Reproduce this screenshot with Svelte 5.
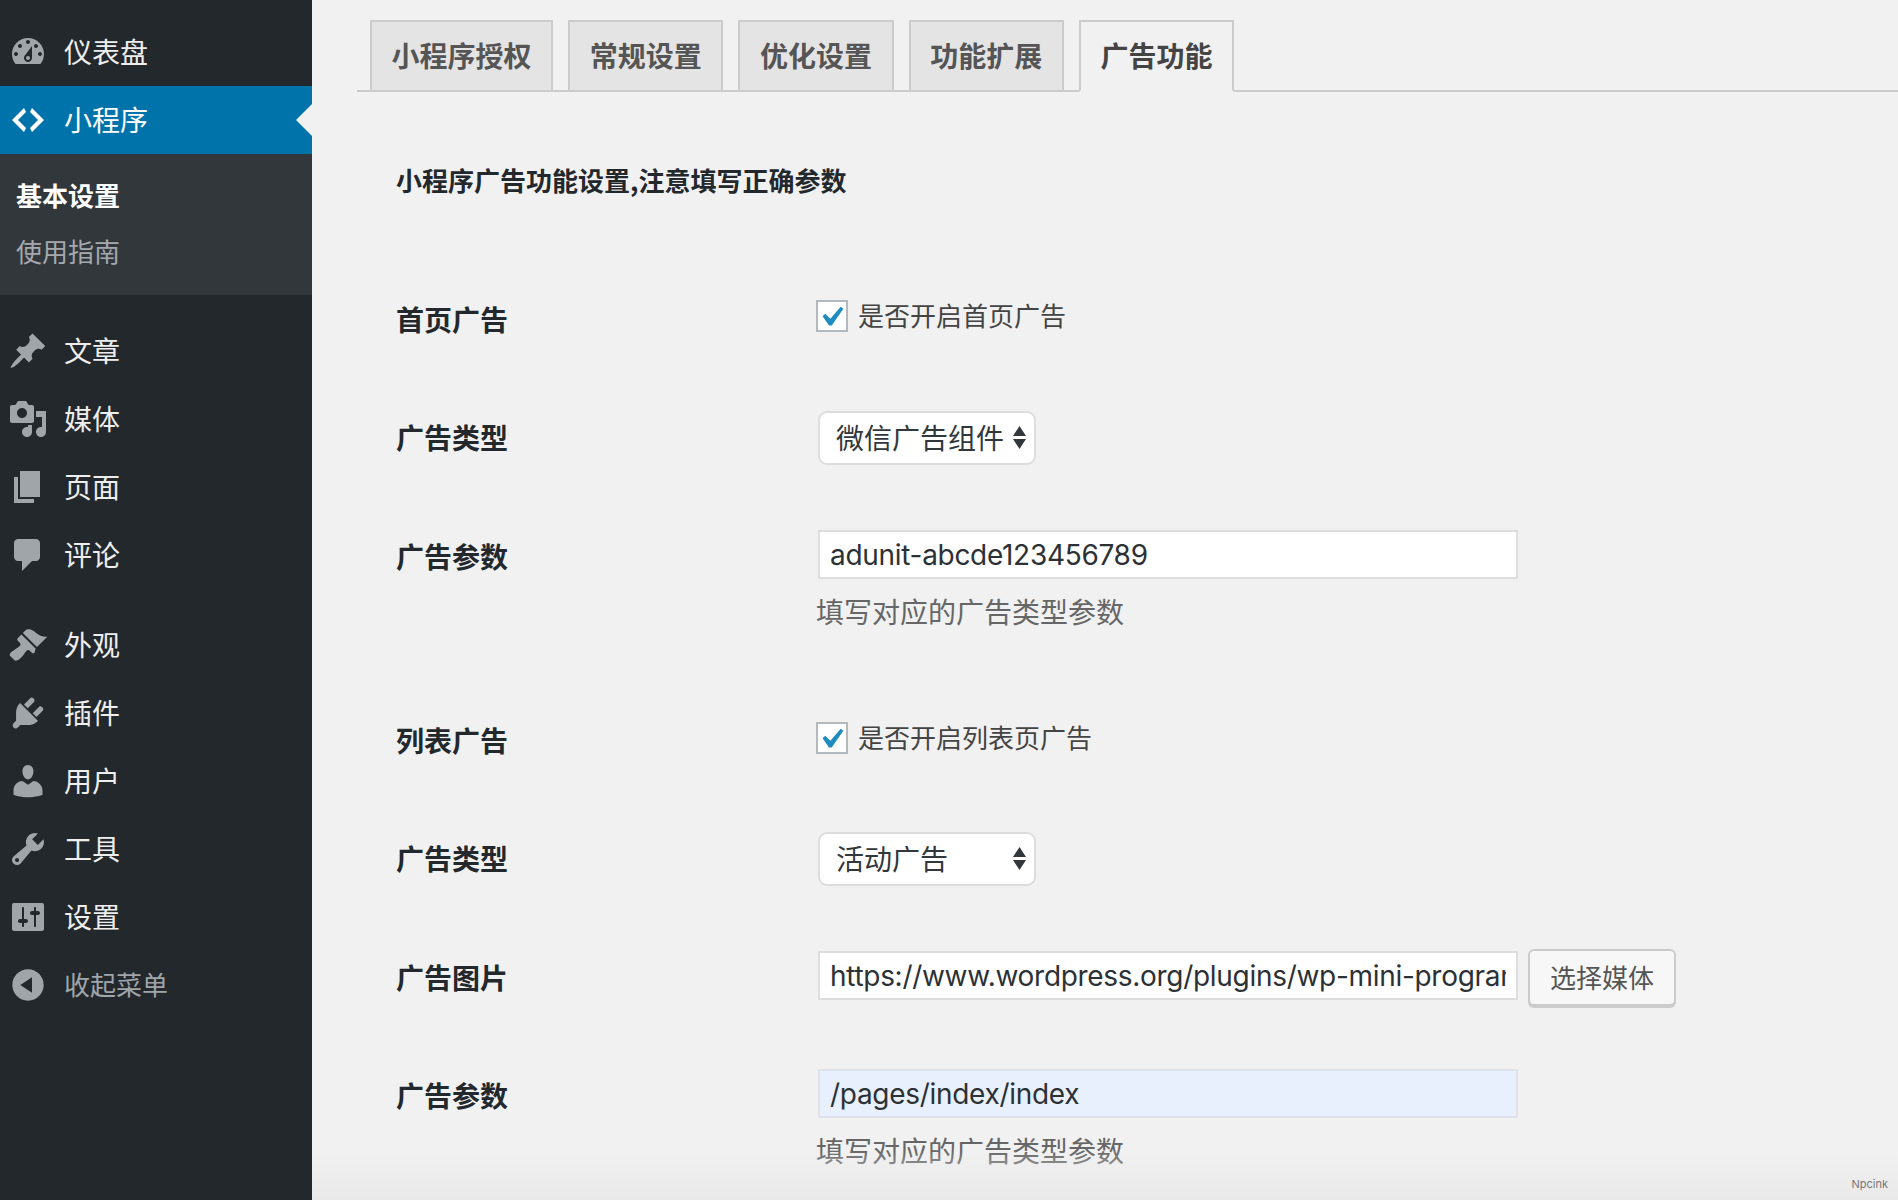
<script>
	// dashicons paths, 20x20 box
	const icons = {
		dashboard: 'M3.76 16h12.48c1.1-1.37 1.76-3.11 1.76-5 0-4.42-3.58-8-8-8s-8 3.58-8 8c0 1.89.66 3.63 1.76 5zM10 4c.55 0 1 .45 1 1s-.45 1-1 1-1-.45-1-1 .45-1 1-1zM6 6c.55 0 1 .45 1 1s-.45 1-1 1-1-.45-1-1 .45-1 1-1zm8 0c.55 0 1 .45 1 1s-.45 1-1 1-1-.45-1-1 .45-1 1-1zm-5.37 5.55L12 7v6c0 1.1-.9 2-2 2s-2-.9-2-2c0-.57.24-1.08.63-1.45zM4 10c.55 0 1 .45 1 1s-.45 1-1 1-1-.45-1-1 .45-1 1-1zm12 0c.55 0 1 .45 1 1s-.45 1-1 1-1-.45-1-1 .45-1 1-1zm-5 3c0-.55-.45-1-1-1s-1 .45-1 1 .45 1 1 1 1-.45 1-1z',
		code: 'M9 6l-4 4 4 4-1 2-6-6 6-6zm2 8l4-4-4-4 1-2 6 6-6 6z',
		post: 'M10.44 3.02l1.82-1.82 6.36 6.35-1.83 1.82c-1.05-.68-2.48-.57-3.41.36l-.75.75c-.92.93-1.04 2.35-.35 3.41l-1.83 1.82-2.41-2.41-2.8 2.79c-.42.42-3.38 2.71-3.8 2.29s1.86-3.39 2.28-3.81l2.79-2.79L4.1 9.36l1.83-1.82c1.05.69 2.48.57 3.4-.36l.75-.75c.93-.92 1.05-2.35.36-3.41z',
		media: 'M13 11V4c0-.55-.45-1-1-1h-1.67L9 1H5L3.67 3H2c-.55 0-1 .45-1 1v7c0 .55.45 1 1 1h10c.55 0 1-.45 1-1zM7 4.5c1.38 0 2.5 1.12 2.5 2.5S8.38 9.5 7 9.5 4.5 8.38 4.5 7 5.62 4.5 7 4.5zM14 6h5v10.5c0 1.38-1.12 2.5-2.5 2.5S14 17.88 14 16.5s1.12-2.5 2.5-2.5c.17 0 .34.02.5.05V9h-3V6zm-4 8.05V13h2v3.5c0 1.38-1.12 2.5-2.5 2.5S7 17.88 7 16.5 8.12 14 9.5 14c.17 0 .34.02.5.05z',
		page: 'M6 15V2h10v13H6zm-1 1h8v2H3V5h2v11z',
		comments: 'M5 2h9c1.1 0 2 .9 2 2v7c0 1.1-.9 2-2 2h-2l-5 5v-5H5c-1.1 0-2-.9-2-2V4c0-1.1.9-2 2-2z',
		appearance: 'M14.48 11.06L7.41 3.99l1.5-1.5c.5-.56 2.3-.47 3.51.32 1.21.8 1.43 1.28 2.91 2.1 1.18.64 2.45 1.26 4.45.85zm-.71.71L6.7 4.7 4.93 6.47c-.39.39-.39 1.02 0 1.41l1.06 1.06c.39.39.39 1.03 0 1.42-.6.6-1.43 1.11-2.21 1.69-.35.26-.7.53-1.01.84C1.43 13.23.4 14.85 1.1 15.55l2.12 2.12c.7.7 2.32-.33 3.66-1.67.31-.31.58-.66.84-1.01.58-.78 1.09-1.61 1.69-2.21.39-.39 1.02-.39 1.41 0l1.06 1.06c.39.39 1.02.39 1.41 0z',
		plugins: 'M13.11 4.36L9.87 7.6 8 5.73l3.24-3.24c.35-.34 1.05-.2 1.56.32.52.51.66 1.21.31 1.55zm-8 1.77l.91-1.12 9.01 9.01-1.19.84c-.71.71-2.63 1.16-3.82 1.16H6.14L4.9 17.26c-.59.59-1.54.59-2.12 0-.59-.58-.59-1.53 0-2.12l1.24-1.24v-3.88c0-1.13.4-3.19 1.09-3.89zm7.26 3.97l3.24-3.24c.34-.35 1.04-.21 1.55.31.52.51.66 1.21.31 1.55l-3.24 3.25z',
		users: 'M10 9.25c-2.27 0-2.73-3.44-2.73-3.44C7 4.02 7.82 2 9.97 2c2.16 0 2.98 2.02 2.71 3.81 0 0-.41 3.44-2.68 3.44zm0 2.57L12.72 10c2.39 0 4.52 2.33 4.52 4.53v2.49s-3.65 1.13-7.24 1.13c-3.65 0-7.24-1.13-7.24-1.13v-2.49c0-2.25 1.94-4.48 4.47-4.48z',
		tools: 'M16.68 9.77c-1.34 1.34-3.3 1.67-4.95.99l-5.41 6.52c-.99.99-2.59.99-3.58 0s-.99-2.59 0-3.57l6.52-5.42c-.68-1.65-.35-3.61.99-4.95 1.28-1.28 3.12-1.62 4.72-1.06l-2.89 2.89 2.82 2.82 2.86-2.87c.53 1.58.18 3.39-1.08 4.65zM3.81 16.21c.4.39 1.04.39 1.43 0 .4-.4.4-1.04 0-1.43-.39-.4-1.03-.4-1.43 0-.39.39-.39 1.03 0 1.43z',
		settings: 'M18 16V4c0-.55-.45-1-1-1H3c-.55 0-1 .45-1 1v12c0 .55.45 1 1 1h14c.55 0 1-.45 1-1zM8 11h1c.55 0 1 .45 1 1s-.45 1-1 1H8v1.5c0 .28-.22.5-.5.5s-.5-.22-.5-.5V13H6c-.55 0-1-.45-1-1s.45-1 1-1h1V5.5c0-.28.22-.5.5-.5s.5.22.5.5V11zm5-2h-1c-.55 0-1-.45-1-1s.45-1 1-1h1V5.5c0-.28.22-.5.5-.5s.5.22.5.5V7h1c.55 0 1 .45 1 1s-.45 1-1 1h-1v5.5c0 .28-.22.5-.5.5s-.5-.22-.5-.5V9z',
		collapse: 'M10 2.16c4.33 0 7.84 3.51 7.84 7.84s-3.51 7.84-7.84 7.84S2.16 14.33 2.16 10 5.71 2.16 10 2.16zm2 11.72V6.12L6.18 9.97z'
	};

	const topMenu = [
		{ icon: 'dashboard', label: '仪表盘' },
		{ icon: 'code', label: '小程序', active: true }
	];
	const contentMenu = [
		{ icon: 'post', label: '文章' },
		{ icon: 'media', label: '媒体' },
		{ icon: 'page', label: '页面' },
		{ icon: 'comments', label: '评论' }
	];
	const adminMenu = [
		{ icon: 'appearance', label: '外观' },
		{ icon: 'plugins', label: '插件' },
		{ icon: 'users', label: '用户' },
		{ icon: 'tools', label: '工具' },
		{ icon: 'settings', label: '设置' }
	];

	const tabs = ['小程序授权', '常规设置', '优化设置', '功能扩展', '广告功能'];
</script>

{#snippet menuItem(item)}
	<a href="#top" class="item" class:active={item.active}>
		<svg class="icon" viewBox="0 0 20 20"><path d={icons[item.icon]} /></svg>
		<span>{item.label}</span>
	</a>
{/snippet}

{#snippet arrows()}
	<svg class="arrows" viewBox="0 0 13 23"><path d="M6.5 0L13 10H0zM0 13h13L6.5 23z" /></svg>
{/snippet}

{#snippet check()}
	<span class="box">
		<svg viewBox="4 3 13 13"><path d="M14.83 4.89l1.34.94-5.81 8.38H9.02L5.78 9.67l1.34-1.25 2.57 2.4z" /></svg>
	</span>
{/snippet}

<div class="page">
	<nav class="sidebar">
		{#each topMenu as item}
			{@render menuItem(item)}
		{/each}
		<div class="submenu">
			<a href="#top" class="current">基本设置</a>
			<a href="#top">使用指南</a>
		</div>
		<div class="group">
			{#each contentMenu as item}
				{@render menuItem(item)}
			{/each}
		</div>
		<div class="group">
			{#each adminMenu as item}
				{@render menuItem(item)}
			{/each}
		</div>
		<a href="#top" class="item collapse">
			<svg class="icon" viewBox="0 0 20 20"><path d={icons.collapse} /></svg>
			<span>收起菜单</span>
		</a>
	</nav>

	<main class="main">
		<div class="tabs">
			{#each tabs as tab, i}
				<a href="#top" class="tab" class:selected={i === tabs.length - 1}>{tab}</a>
			{/each}
		</div>

		<div class="content">
			<h2>小程序广告功能设置,注意填写正确参数</h2>

			<div class="row check-row">
				<div class="label check-label">首页广告</div>
				<label class="check">
					{@render check()}
					<span class="check-text">是否开启首页广告</span>
				</label>
			</div>

			<div class="row select-row">
				<div class="label">广告类型</div>
				<div class="select">
					<select><option>微信广告组件</option></select>
					{@render arrows()}
				</div>
			</div>

			<div class="row note-row">
				<div class="label">广告参数</div>
				<div>
					<input class="text" type="text" value="adunit-abcde123456789" />
					<p class="desc">填写对应的广告类型参数</p>
				</div>
			</div>

			<div class="row check-row">
				<div class="label check-label second">列表广告</div>
				<label class="check">
					{@render check()}
					<span class="check-text">是否开启列表页广告</span>
				</label>
			</div>

			<div class="row select-row">
				<div class="label">广告类型</div>
				<div class="select">
					<select><option>活动广告</option></select>
					{@render arrows()}
				</div>
			</div>

			<div class="row media-row">
				<div class="label">广告图片</div>
				<div class="media">
					<input class="text" type="text" value="https://www.wordpress.org/plugins/wp-mini-program" />
					<button type="button">选择媒体</button>
				</div>
			</div>

			<div class="row">
				<div class="label">广告参数</div>
				<div>
					<input class="text filled" type="text" value="/pages/index/index" />
					<p class="desc">填写对应的广告类型参数</p>
				</div>
			</div>
		</div>

		<div class="fade"></div>
		<span class="mark">Npcink</span>
	</main>
</div>

<style>
	:global(body) {
		background: #f1f1f1;
		font-family: 'Noto Sans CJK SC', 'Noto Sans', sans-serif;
	}

	.page {
		display: flex;
		height: 1200px;
		overflow: hidden;
	}

	.sidebar {
		flex: 0 0 312px;
		padding-top: 18px;
		background: #23282d;
	}

	.item {
		position: relative;
		display: flex;
		align-items: center;
		gap: 16px;
		height: 68px;
		padding-left: 8px;
		color: #eee;
		font-size: 28px;
		text-decoration: none;
	}

	.item span {
		padding-bottom: 3px;
	}

	.icon {
		width: 40px;
		height: 40px;
		fill: #a0a5aa;
	}

	.item.active {
		background: #0073aa;
		color: #fff;
	}

	.item.active .icon {
		fill: #fff;
	}

	.item.active::after {
		content: '';
		position: absolute;
		right: 0;
		top: 18px;
		border: 16px solid transparent;
		border-left-width: 0;
		border-right-color: #f1f1f1;
	}

	.submenu {
		display: flex;
		flex-direction: column;
		height: 141px;
		padding: 13px 0 16px;
		box-sizing: border-box;
		background: #32373c;
	}

	.submenu a {
		padding-left: 16px;
		color: #a5a9ae;
		font-size: 26px;
		line-height: 56px;
		text-decoration: none;
	}

	.submenu .current {
		color: #fff;
		font-weight: 700;
	}

	.group {
		padding-top: 22px;
	}

	.collapse {
		color: #a0a5aa;
		font-size: 26px;
	}

	.main {
		position: relative;
		flex: 1;
		padding-top: 20px;
		color: #444;
	}

	.tabs {
		display: flex;
		gap: 15px;
		margin-left: 45px;
		padding-left: 13px;
		border-bottom: 2px solid #ccc;
	}

	.tab {
		margin-bottom: -2px;
		padding: 0 19.6px 2px;
		border: 2px solid #ccc;
		background: #e4e4e4;
		color: #555;
		font-size: 28px;
		font-weight: 700;
		line-height: 66px;
		text-decoration: none;
	}

	.tab.selected {
		border-bottom-color: #f1f1f1;
		background: #f1f1f1;
		color: #444;
	}

	.content {
		padding: 70px 0 0 84px;
	}

	h2 {
		margin: 0 0 102px;
		color: #23282d;
		font-size: 26px;
		font-weight: 700;
		line-height: 36px;
	}

	.row {
		display: grid;
		grid-template-columns: 420px 1fr;
		align-items: start;
	}

	.check-row {
		padding-bottom: 74px;
	}

	.select-row {
		padding-bottom: 65px;
	}

	.note-row {
		padding-bottom: 93px;
	}

	.media-row {
		padding-bottom: 63px;
	}

	.label {
		margin-top: 8px;
		color: #23282d;
		font-size: 28px;
		font-weight: 700;
		line-height: 36px;
	}

	.check-label {
		margin-top: 1px;
	}

	.check-label.second {
		margin-top: 0;
	}

	.check {
		display: flex;
		align-items: center;
		gap: 10px;
		height: 32px;
		color: #444;
		font-size: 26px;
	}

	.check-text {
		padding-bottom: 3px;
	}

	.box {
		display: flex;
		align-items: center;
		justify-content: center;
		width: 32px;
		height: 32px;
		box-sizing: border-box;
		border: 2px solid #b4b9be;
		background: #fff;
	}

	.box svg {
		width: 26px;
		height: 26px;
		fill: #1e8cbe;
	}

	.select {
		position: relative;
		width: 218px;
		margin-left: 2px;
	}

	select {
		display: block;
		width: 100%;
		height: 54px;
		padding: 0 0 2px 16px;
		border: 2px solid #ddd;
		border-radius: 9px;
		background: #fff;
		color: #32373c;
		font-family: inherit;
		font-size: 28px;
		appearance: none;
	}

	.arrows {
		position: absolute;
		right: 10px;
		top: 15px;
		width: 13px;
		height: 23px;
		fill: #32373c;
	}

	.text {
		display: block;
		width: 700px;
		height: 49px;
		margin-left: 2px;
		padding: 0 10px;
		box-sizing: border-box;
		border: 2px solid #ddd;
		background: #fff;
		color: #2c3136;
		font-family: 'Inter', 'Noto Sans CJK SC', sans-serif;
		font-size: 28px;
		letter-spacing: -0.3px;
		outline: none;
	}

	.text.filled {
		background: #e8f0fe;
		border-color: #dfe2e8;
	}

	.desc {
		margin: 14px 0 0;
		color: #666;
		font-size: 28px;
		line-height: 36px;
	}

	.media {
		display: flex;
		align-items: flex-start;
		gap: 10px;
	}

	button {
		width: 148px;
		height: 57px;
		margin-top: -2px;
		padding: 0 0 3px;
		border: 2px solid #ccc;
		border-radius: 6px;
		background: #f7f7f7;
		box-shadow: 0 2px 0 #ccc;
		color: #555;
		font-family: inherit;
		font-size: 26px;
	}

	.fade {
		position: absolute;
		left: 0;
		right: 0;
		bottom: 0;
		height: 50px;
		background: linear-gradient(rgba(230, 230, 230, 0), #e9e9e9);
		pointer-events: none;
	}

	.mark {
		position: absolute;
		right: 10px;
		bottom: 9px;
		color: #777;
		font-family: 'Inter', sans-serif;
		font-size: 11px;
	}
</style>
